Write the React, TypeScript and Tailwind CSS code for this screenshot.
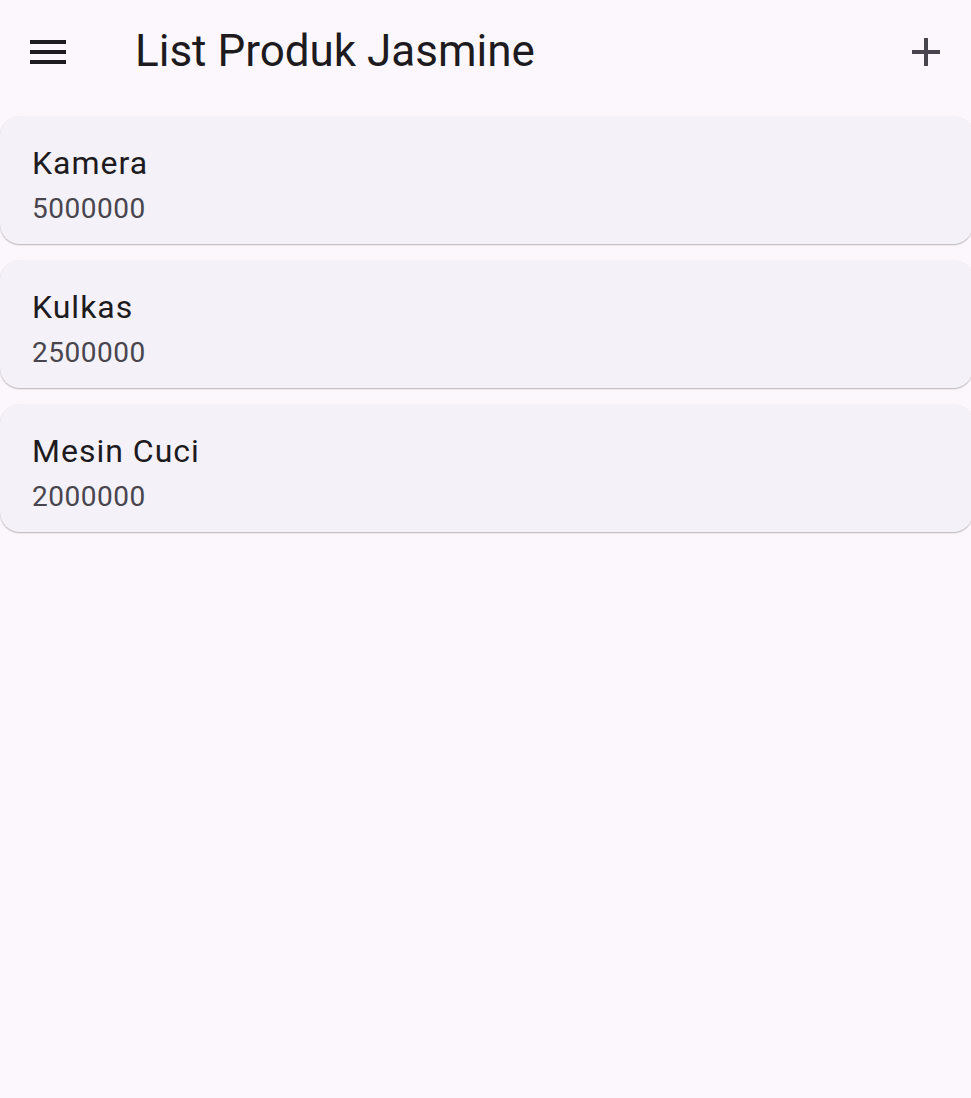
import React from "react";

const products = [
  { id: 1, name: "Kamera", price: "5000000" },
  { id: 2, name: "Kulkas", price: "2500000" },
  { id: 3, name: "Mesin Cuci", price: "2000000" },
];

const MenuIcon = () => (
  <svg width="36" height="24" viewBox="0 0 18 12" fill="#1d1b20">
    <rect x="0" y="0" width="18" height="2" />
    <rect x="0" y="5" width="18" height="2" />
    <rect x="0" y="10" width="18" height="2" />
  </svg>
);

const AddIcon = () => (
  <svg width="28" height="28" viewBox="0 0 14 14" fill="#49454f">
    <rect x="6" y="0" width="2" height="14" />
    <rect x="0" y="6" width="14" height="2" />
  </svg>
);

const App = () => {
  return (
    <div
      className="min-h-[1098px] w-full bg-[#fcf7fd]"
      style={{ fontFamily: "Roboto, 'Noto Sans', sans-serif" }}
    >
      <div className="flex h-[104px] items-center">
        <div className="ml-[24px] flex h-[48px] w-[48px] items-center justify-center">
          <MenuIcon />
        </div>
        <h1 className="ml-[63px] pb-[2px] text-[44px] leading-[52px] font-normal text-[#1d1b20]">
          List Produk Jasmine
        </h1>
        <div className="ml-auto mr-[21px] flex h-[48px] w-[48px] items-center justify-center">
          <AddIcon />
        </div>
      </div>
      <div className="flex flex-col gap-[16px] pt-[12px]">
        {products.map((p) => (
          <div
            key={p.id}
            className="h-[128px] w-[973px] rounded-[20px] bg-[#f4f1f8] pl-[32px] pt-[23px] shadow-[0_1px_1.5px_rgba(0,0,0,0.28)]"
          >
            <p className="text-[32px] leading-[48px] tracking-[1px] text-[#1d1b20]">
              {p.name}
            </p>
            <p className="text-[28px] leading-[43px] tracking-[0.5px] text-[#49454f]">
              {p.price}
            </p>
          </div>
        ))}
      </div>
    </div>
  );
};

export default App;
